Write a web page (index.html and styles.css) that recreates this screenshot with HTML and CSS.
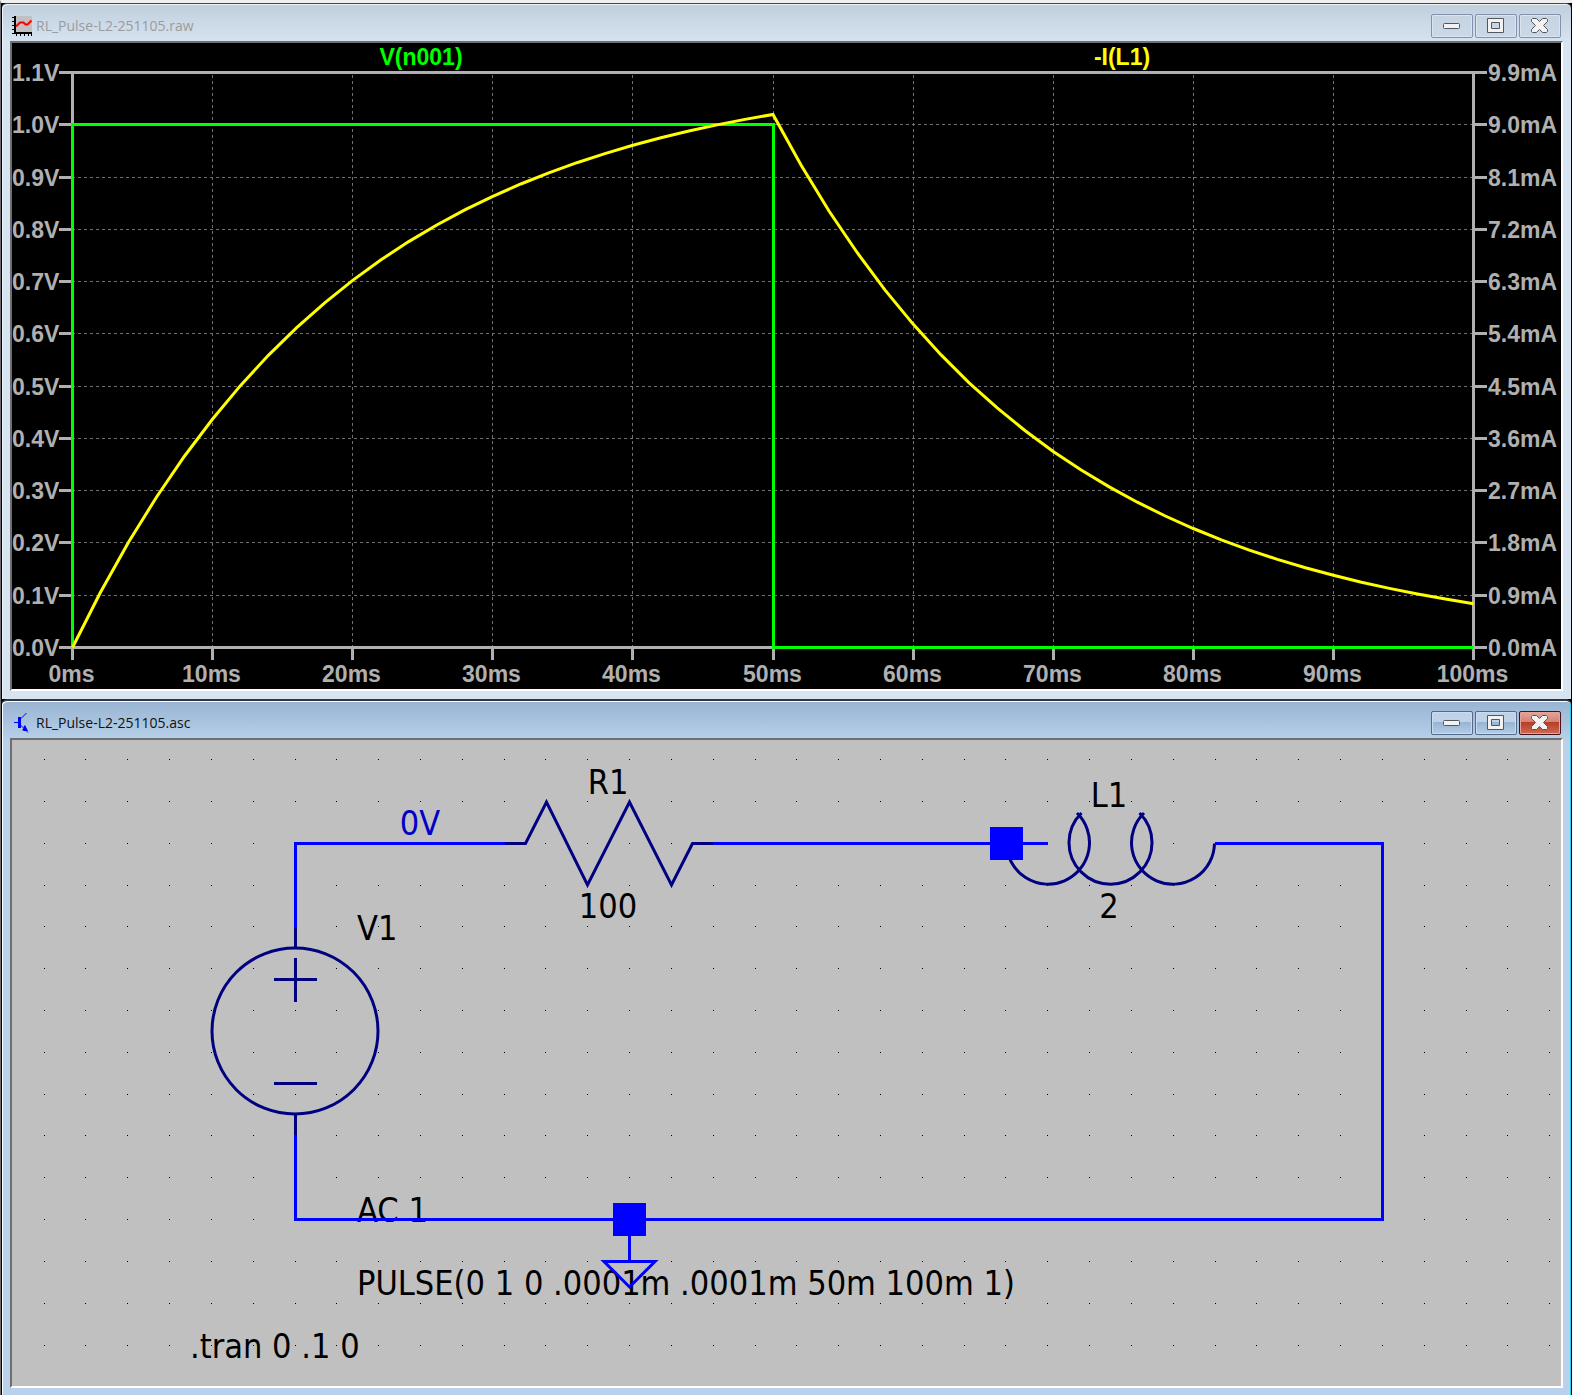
FILE: index.html
```html
<!DOCTYPE html>
<html lang="en">
<head>
    <meta charset="UTF-8">
    <meta name="viewport" content="width=device-width, initial-scale=1">
    <title>RL_Pulse-L2-251105</title>
    <link rel="stylesheet" href="styles.css">
</head>
<body>
    <section class="window">
        <header class="titlebar">
            <svg class="icon" viewBox="0 0 20 20" aria-hidden="true">
                <rect x="4" y="0" width="16" height="16" fill="#c0c0c0"/>
                <path d="M2 0h2v16h16v2H2zM0 1h2v1H0zM0 5h2v1H0zM0 9h2v1H0zM0 13h2v1H0zM0 17h2v1H0zM4 18h1v2H4zM8 18h1v2H8zM12 18h1v2h-1zM16 18h1v2h-1zM19 18h1v2h-1z" fill="#000"/>
                <path d="M4 10.500L8 6.500H11.500L13.500 8.500H15.500L19.500 4.500" fill="none" stroke="#f00" stroke-width="2"/>
            </svg>
            <h1 class="title">RL_Pulse-L2-251105.raw</h1>
            <div class="controls">
                <button class="control" type="button" aria-label="Minimize">
                    <svg class="glyph" viewBox="0 0 20 16"><rect x="1.500" y="5.500" width="16" height="5" rx="1"/></svg>
                </button>
                <button class="control" type="button" aria-label="Maximize">
                    <svg class="glyph" viewBox="0 0 20 16"><path d="M1.500 0.500h16v14h-16zM5.500 4.500v6h8v-6z" fill-rule="evenodd"/></svg>
                </button>
                <button class="control" type="button" aria-label="Close">
                    <svg class="glyph" viewBox="0 0 20 16"><path d="M2.500 0.500h4l3 3 3-3h4l1 1v2l-4 4 4 4v2l-1 1h-4l-3-3-3 3h-4l-1-1v-2l4-4-4-4v-2z"/></svg>
                </button>
            </div>
        </header>
        <div class="view">
            <svg id="plot" class="plot" viewBox="0 0 1549 646" role="img" aria-label="V(n001) and -I(L1) against time"></svg>
        </div>
    </section>

    <section class="window active">
        <header class="titlebar">
            <svg class="icon" viewBox="0 0 20 20" aria-hidden="true">
                <path d="M6 4h3v11H6zM2 9h4v1H2zM12 13l1-1 1 2 2 4h-4l-2-1 1-1z" fill="#00f"/>
                <path d="M9 5.500L14.500 0M8.500 12L16 19.500" fill="none" stroke="#00f" stroke-width="1"/>
            </svg>
            <h2 class="title">RL_Pulse-L2-251105.asc</h2>
            <div class="controls">
                <button class="control" type="button" aria-label="Minimize">
                    <svg class="glyph" viewBox="0 0 20 16"><rect x="1.500" y="5.500" width="16" height="5" rx="1"/></svg>
                </button>
                <button class="control" type="button" aria-label="Maximize">
                    <svg class="glyph" viewBox="0 0 20 16"><path d="M1.500 0.500h16v14h-16zM5.500 4.500v6h8v-6z" fill-rule="evenodd"/></svg>
                </button>
                <button class="control close" type="button" aria-label="Close">
                    <svg class="glyph" viewBox="0 0 20 16"><path d="M2.500 0.500h4l3 3 3-3h4l1 1v2l-4 4 4 4v2l-1 1h-4l-3-3-3 3h-4l-1-1v-2l4-4-4-4v-2z"/></svg>
                </button>
            </div>
        </header>
        <div class="view">
            <svg class="schematic" viewBox="0 0 1549 646" role="img" aria-label="RL circuit schematic">
                <g id="dots"></g>

                <text class="mid" x="596" y="54">R1</text>
                <text class="mid" x="596" y="178">100</text>
                <text class="mid" x="1097" y="67">L1</text>
                <text class="mid" x="1097" y="178">2</text>
                <text class="mid net" x="408" y="95">0V</text>
                <text x="345" y="200">V1</text>
                <text x="345" y="482">AC 1</text>
                <text x="345" y="555">PULSE(0 1 0 .0001m .0001m 50m 100m 1)</text>
                <text x="178" y="618">.tran 0 .1 0</text>

                <!-- V1 -->
                <path class="part" d="M283.500 188V208M283.500 374V395M283.500 218V262M262 239.500H305M262 343.500H305"/>
                <circle class="part" cx="283" cy="291" r="83"/>

                <!-- R1 -->
                <path class="part" d="M493 103.500H513.500L534.500 62L575.500 145L617.500 62L659.500 145L680.500 103.500H701"/>

                <!-- L1 -->
                <path class="part" d="M994.500 103.500A41.500 41.500 0 1 0 1065 73M1069.500 73A41.500 41.500 0 1 0 1127.500 73M1132 73A41.500 41.500 0 1 0 1202.500 103.500"/>

                <!-- wires -->
                <path class="wire" d="M283.500 188V103.500H493M701 103.500H1036M1203 103.500H1370.500V479.500H283.500V395"/>
                <rect class="node" x="978" y="87" width="33" height="33"/>
                <rect class="node" x="601" y="463" width="33" height="33"/>

                <!-- ground -->
                <path class="wire" d="M617.500 496V521.500M592 521.500H643L617.500 547Z"/>
            </svg>
        </div>
    </section>

    <script src="script.js"></script>
</body>
</html>
```
FILE: styles.css
```css
* {
    box-sizing: border-box;
}
body {
    margin: 0;
    border-top: 3px solid #f0f0f0;
    border-left: 1px solid #6c6c72;
    background-color: #000;
    font-family: "Open Sans", "Noto Sans", sans-serif;
}

/* windows */
.window {
    margin: 0 1px;
    padding: 1px 8px 8px;
    border-top: 1px solid #45474d;
    background: linear-gradient(#c1cedb, #d7e4f2 40px);
    box-shadow: inset 1px 1px #eef4fa;
    border-radius: 5px 5px 0 0;
}
.window.active {
    border-top: 2px solid #33343c;
    padding-bottom: 7px;
    background: linear-gradient(#98b4d2, #b9d1ea 40px);
    box-shadow: inset 1px 1px #fff, inset -1px 0 #1fd0f0;
}
.titlebar {
    display: flex;
    align-items: center;
    gap: 4px;
    padding: 9px 2px 3px;
}
.icon {
    width: 20px;
    height: 20px;
}
.title {
    flex: 1;
    margin: 0;
    font-size: 14px;
    font-weight: normal;
    line-height: 24px;
    color: #9b9b9b;
}
.active .title {
    color: #111;
}

/* window buttons */
.controls {
    display: flex;
    gap: 2px;
}
.control {
    display: flex;
    align-items: center;
    justify-content: center;
    width: 42px;
    height: 24px;
    padding: 0;
    border: 1px solid #8391b0;
    border-radius: 2px;
    background: linear-gradient(#c6d3e2, #cbd8e8);
    box-shadow: inset 0 0 0 1px #d9e4f0;
}
.active .control {
    border-color: #566a8c;
    background: linear-gradient(#bfd2e8 45%, #97b3d2 45%, #b4cde8);
    box-shadow: inset 0 0 0 1px #c9dcf0;
}
.active .close {
    border-color: #43141c;
    background: linear-gradient(#e3a59b, #d28375 45%, #b53c26 45%, #cf6a52);
    box-shadow: inset 0 0 0 1px #e5a497;
}
.glyph {
    width: 20px;
    height: 16px;
    fill: #f2f2f2;
    stroke: #53565f;
    stroke-width: 1;
}

/* sunken client area */
.view {
    border: 2px solid;
    border-color: #6f6f6f #fff #fff #6f6f6f;
}
.plot,
.schematic {
    display: block;
    width: 100%;
    height: auto;
}

/* waveform */
.plot {
    background-color: #000;
    font: bold 23px "Liberation Sans", Arial, sans-serif;
    fill: #b0b0b0;
}
.plot .grid {
    stroke: #707070;
    stroke-width: 1;
    stroke-dasharray: 3 3;
}
.plot .axis {
    stroke: #b0b0b0;
    stroke-width: 3;
    fill: none;
}
.plot .voltage,
.plot .current {
    stroke-width: 3;
    fill: none;
}
.plot .voltage {
    stroke: #0f0;
}
.plot .current {
    stroke: #ff0;
}
.plot .voltage-name {
    fill: #0f0;
}
.plot .current-name {
    fill: #ff0;
}
.mid {
    text-anchor: middle;
}

/* schematic */
.schematic {
    background-color: #c0c0c0;
    font: 34px "DejaVu Sans Condensed", "DejaVu Sans", sans-serif;
    fill: #000;
}
.schematic .net {
    fill: #0000c8;
}
.schematic .wire,
.schematic .part {
    fill: none;
    stroke-width: 3;
}
.schematic .wire {
    stroke: #00f;
}
.schematic .part {
    stroke: #000080;
}
.schematic .node {
    fill: #00f;
}
```
FILE: script.js
```js
const NS = 'http://www.w3.org/2000/svg';

function add(parent, name, attrs, text) {
    const el = document.createElementNS(NS, name);
    for (const key in attrs) {
        el.setAttribute(key, attrs[key]);
    }
    if (text) {
        el.textContent = text;
    }
    parent.appendChild(el);
}

// Plot area: 0..100ms across, 0..1.1V (0..9.9mA) up
const plot = document.getElementById('plot');
const left = 60.5, right = 1461.5, top0 = 29.5, bottom = 604.5;
const x = ms => left + (right - left) * ms / 100;
const y = v => bottom - (bottom - top0) * v / 1.1;
const snap = n => Math.floor(n) + 0.5;

for (let i = 1; i < 11; i++) {
    add(plot, 'path', {class: 'grid', d: `M60 ${snap(y(i / 10))}H${right}`});
}
for (let i = 1; i < 10; i++) {
    add(plot, 'path', {class: 'grid', d: `M${snap(x(i * 10))} 32V${bottom}`});
}

add(plot, 'path', {class: 'axis', d: `M${left} ${top0}H${right}V${bottom}H${left}Z`});
for (let i = 0; i <= 11; i++) {
    const py = snap(y(i / 10));
    add(plot, 'path', {class: 'axis', d: `M47 ${py}H${left}M${right} ${py}H1475`});
    add(plot, 'text', {x: 0, y: py + 8}, (i / 10).toFixed(1) + 'V');
    add(plot, 'text', {x: 1476, y: py + 8}, (i * 0.9).toFixed(1) + 'mA');
}
for (let i = 0; i <= 10; i++) {
    const px = snap(x(i * 10));
    add(plot, 'path', {class: 'axis', d: `M${px} ${bottom}V617`});
    add(plot, 'text', {class: 'mid', x: px - 1, y: 639}, i * 10 + 'ms');
}

// V(n001): one 50ms pulse
add(plot, 'path', {class: 'voltage', d: `M${left} ${bottom}V${snap(y(1))}H${snap(x(50))}V${bottom}H${right}`});

// -I(L1): tau = L/R = 20ms
const points = [];
for (let t = 0; t <= 100; t += 2) {
    const peak = 10 * (1 - Math.exp(-2.5));
    const mA = t <= 50 ? 10 * (1 - Math.exp(-t / 20)) : peak * Math.exp(-(t - 50) / 20);
    points.push(x(t).toFixed(1) + ',' + y(mA / 9).toFixed(1));
}
add(plot, 'polyline', {class: 'current', points: points.join(' ')});

add(plot, 'text', {class: 'mid voltage-name', x: 409, y: 22}, 'V(n001)');
add(plot, 'text', {class: 'mid current-name', x: 1110, y: 22}, '-I(L1)');

// Schematic grid dots
const dots = document.getElementById('dots');
for (let row = 0; row < 15; row++) {
    for (let col = 0; col < 37; col++) {
        add(dots, 'rect', {x: Math.floor(32.13 + col * 41.82), y: Math.floor(19.6 + row * 41.82), width: 1, height: 1});
    }
}
```
